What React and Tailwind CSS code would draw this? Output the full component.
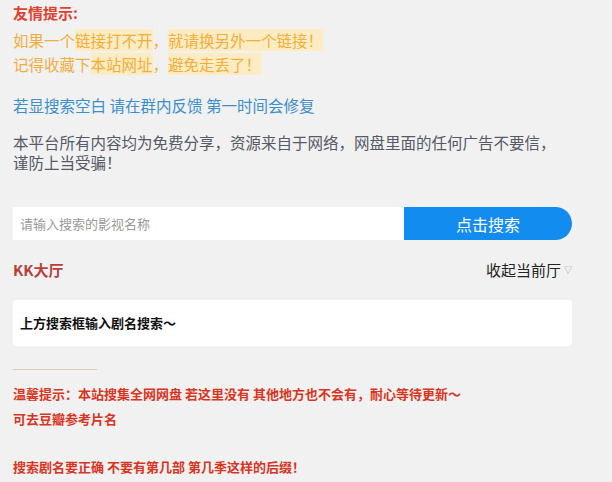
export default function App() {
  const font = { fontFamily: '"Noto Sans CJK SC", "Noto Sans", sans-serif' };
  return (
    <div className="w-[612px] h-[482px] bg-[#f1f1f2] overflow-hidden" style={font}>
      <div className="px-[13px] pt-[4px]">
        <div className="text-[15px] leading-[18px] font-bold text-[#e0402e]">友情提示:</div>
        <div className="mt-[6px] text-[15.5px] leading-[24px] text-[#f2ad3c]">
          <div>如果一个<span className="bg-[#fdecc2]">链接打不开</span>，<span className="bg-[#fdecc2]">就请换另外一个链接！</span></div>
          <div>记得收藏下<span className="bg-[#fdecc2]">本站网址</span>，<span className="bg-[#fdecc2]">避免走丢了！</span></div>
        </div>
        <div className="mt-[18px] text-[15.5px] leading-[22px] text-[#3b8fcc]">若显搜索空白 请在群内反馈 第一时间会修复</div>
        <div className="mt-[16px] text-[15.5px] leading-[20px] text-[#555a66]">
          本平台所有内容均为免费分享，资源来自于网络，网盘里面的任何广告不要信，<br />谨防上当受骗！
        </div>
        <div className="mt-[35px] flex h-[33px] w-[559px]">
          <div className="flex-1 bg-white flex items-center pl-[7px] text-[13px] text-[#9a9a9a]">请输入搜索的影视名称</div>
          <div className="w-[168px] bg-[#138cf0] rounded-r-[17px] flex items-center justify-center text-white text-[16px]">点击搜索</div>
        </div>
        <div className="mt-[20px] flex items-center justify-between w-[559px] h-[20px]">
          <div className="text-[15px] font-bold text-[#b8403c]">KK大厅</div>
          <div className="flex items-center text-[15px] text-[#222]">
            收起当前厅
            <span className="ml-[3px] text-[8px] text-[#999]">▽</span>
          </div>
        </div>
        <div className="mt-[20px] w-[559px] h-[46px] bg-white rounded-[3px] flex items-center pl-[7px] text-[13px] font-bold text-[#111]">
          上方搜索框输入剧名搜索～
        </div>
        <div className="mt-[23px] w-[84px] h-[1px] bg-[#d9cbb5]"></div>
        <div className="mt-[11px] text-[13px] leading-[25px] font-bold text-[#d8351f]">
          <div>温馨提示：本站搜集全网网盘 若这里没有 其他地方也不会有，耐心等待更新～</div>
          <div>可去豆瓣参考片名</div>
          <div className="mt-[23px]">搜索剧名要正确 不要有第几部 第几季这样的后缀！</div>
        </div>
      </div>
    </div>
  );
}
